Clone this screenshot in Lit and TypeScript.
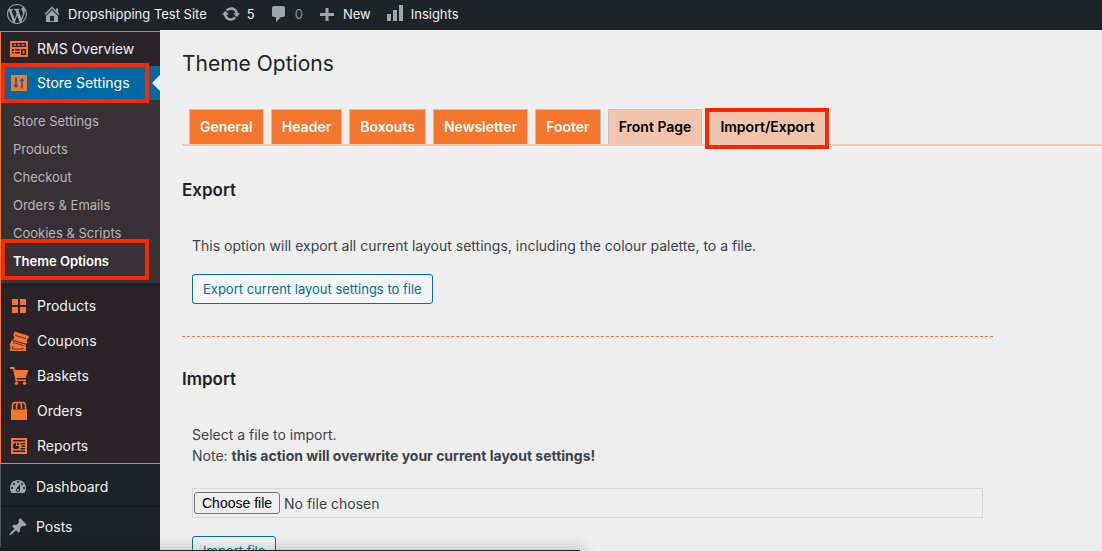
import { LitElement, html, css, svg, nothing, TemplateResult } from "lit";
import { customElement, property } from "lit/decorators.js";
import { classMap } from "lit/directives/class-map.js";

const path = (d: string) => svg`<path fill-rule="evenodd" d=${d}></path>`;

const ICONS: Record<string, TemplateResult> = {
  wordpress: path(
    "M20 10c0-5.51-4.49-10-10-10C4.48 0 0 4.49 0 10c0 5.52 4.48 10 10 10 5.51 0 10-4.48 10-10zM7.78 15.37L4.37 6.22c.55-.02 1.17-.08 1.17-.08.5-.06.44-1.13-.06-1.11 0 0-1.45.11-2.37.11-.18 0-.37 0-.58-.01C4.12 2.69 6.87 1.11 10 1.11c2.33 0 4.45.87 6.05 2.34-.68-.11-1.65.39-1.65 1.58 0 .74.45 1.36.9 2.1.35.61.55 1.36.55 2.46 0 1.49-1.4 5-1.4 5l-3.03-8.37c.54-.02.82-.17.82-.17.5-.05.44-1.25-.06-1.22 0 0-1.44.12-2.38.12-.87 0-2.33-.12-2.33-.12-.5-.03-.56 1.2-.06 1.22l.92.08 1.26 3.41zM17.41 10c.24-.64.74-1.87.43-4.25.7 1.29 1.05 2.71 1.05 4.25 0 3.29-1.73 6.24-4.4 7.78.97-2.59 1.94-5.2 2.92-7.78zM6.1 18.09C3.12 16.65 1.11 13.53 1.11 10c0-1.3.23-2.48.72-3.59C3.25 10.3 4.67 14.2 6.1 18.09zm4.03-6.63l2.58 6.98c-.86.29-1.76.45-2.71.45-.79 0-1.57-.11-2.29-.33.81-2.38 1.62-4.74 2.42-7.1z"
  ),
  home: path(
    "M16 8.5l1.53 1.53-1.06 1.06L10 4.6l-6.47 6.47-1.06-1.06L10 2.5l4 4v-2h2v4zm-6-2.46l6 5.99V18H4v-5.97zM12 17v-5H8v5h4z"
  ),
  update: path(
    "M10.2 3.28c3.53 0 6.43 2.61 6.92 6h2.08l-3.5 4-3.5-4h2.32c-.45-1.97-2.21-3.45-4.32-3.45-1.45 0-2.73.71-3.54 1.78L4.95 5.66C6.23 4.2 8.11 3.28 10.2 3.28zm-.4 13.44c-3.52 0-6.43-2.61-6.92-6H.8l3.5-4c1.17 1.33 2.33 2.67 3.5 4H5.48c.45 1.97 2.21 3.45 4.32 3.45 1.45 0 2.73-.71 3.54-1.78l1.71 1.95c-1.28 1.46-3.15 2.38-5.25 2.38z"
  ),
  comment: path(
    "M5 2h9c1.1 0 2 .9 2 2v7c0 1.1-.9 2-2 2h-2l-5 5v-5H5c-1.1 0-2-.9-2-2V4c0-1.1.9-2 2-2z"
  ),
  plus: path("M17 9v3h-5.500v5h-3v-5H3V9h5.500V4h3v5z"),
  bars: path("M2 10h4v7H2zM8 6h4v11H8zM14 1h4v16h-4z"),
  overview: path(
    "M1 2h18v16H1zM3 4v4h14V4zm0 6v2h2v-2zm3 0v1.500h5V10zm0 3v1.500h5V13zm-3 0v1.500h2V13zm9-3v6h5v-6zM4.500 5.300h2.500v1.400H4.500zM8.500 5.300h2.500v1.400H8.500zM12.500 5.300h3v1.400h-3zM13.500 11.500h2v3h-2z"
  ),
  sliders: path(
    "M2 2h16v16H2zM6.200 4.500v7.500H4.400L7 15l2.600-3H7.800v-7.500zM12.200 8V15.500h1.600V8h1.800L13 5l-2.600 3z"
  ),
  grid: path("M3 3h6v6H3zM11 3h6v6h-6zM3 11h6v6H3zM11 11h6v6h-6z"),
  coupons: svg`
    <path d="M5.500 0.500 L20 5 L19 8 L18 8.500 L17.800 10 L18.300 11 L17.500 13 L3.500 9 L5 7.500 L5.300 6 L4.300 4.500z"></path>
    <path d="M3 9 L17 13 L16.500 17 L1 12.800z"></path>
    <path d="M0.500 13.500 L2 12 L17 16 L17 20 L0.500 20 L1.500 18 L1.500 16z"></path>
    <path class="cut" d="M6 4.300 L17 7.700 M3.500 9.400 L17 13.300 M4 11.500 L14.500 14.500 M4 15 L3.500 18 L14 18 L14 16.500"></path>`,
  cart: svg`
    <path d="M1 1h4.200l1 3H19.500L16.500 12H7.500l.5 1.500h9V15H6.500L4 3H1z"></path>
    <circle cx="7.500" cy="17.300" r="1.700"></circle><circle cx="15.500" cy="17.300" r="1.700"></circle>`,
  bag: svg`
    <path d="M2 8.500h16V19H2z"></path>
    <path class="line" d="M3.500 9V5q0-3.500 3-3.500h7q3 0 3 3.500V9M7.500 8V5q0-3 1.500-3M12.500 8V5q0-3-1.500-3"></path>`,
  report: path(
    "M2 2h16v16H2zM4 4v1.500h12V4zM4 14.500V16h12v-1.500zM7 6.800a3.200 3.200 0 1 0 3.200 3.200H7zM8 6.500V9h2.500A2.700 2.700 0 0 0 8 6.500zM11.500 7v1.400H16V7zm1 2.500v1.400H16V9.500zm-1 2.500v1.400H16V12z"
  ),
  dashboard: path(
    "M3.76 16h12.48c1.1-1.37 1.76-3.11 1.76-5 0-4.42-3.58-8-8-8s-8 3.58-8 8c0 1.89.66 3.63 1.76 5zM10 4c.55 0 1 .45 1 1s-.45 1-1 1-1-.45-1-1 .45-1 1-1zM6 6c.55 0 1 .45 1 1s-.45 1-1 1-1-.45-1-1 .45-1 1-1zm8 0c.55 0 1 .45 1 1s-.45 1-1 1-1-.45-1-1 .45-1 1-1zm-5.37 5.55L12 7v6c0 1.1-.9 2-2 2s-2-.9-2-2c0-.57.24-1.08.63-1.45zM4 10c.55 0 1 .45 1 1s-.45 1-1 1-1-.45-1-1 .45-1 1-1zm12 0c.55 0 1 .45 1 1s-.45 1-1 1-1-.45-1-1 .45-1 1-1zm-5 3c0-.55-.45-1-1-1s-1 .45-1 1 .45 1 1 1 1-.45 1-1z"
  ),
  pin: path(
    "M10.44 3.02l1.82-1.82 6.36 6.35-1.83 1.82c-1.05-.68-2.48-.57-3.41.36l-.75.75c-.92.93-1.04 2.35-.35 3.41l-1.83 1.82-2.41-2.41-2.8 2.79c-.42.42-3.38 2.71-3.8 2.29s1.86-3.39 2.28-3.81l2.79-2.79L4.1 9.36l1.83-1.82c1.05.69 2.48.57 3.4-.36l.75-.75c.93-.92 1.05-2.35.36-3.41z"
  ),
};

@customElement("ui-icon")
export class UiIcon extends LitElement {
  @property() name = "";

  static styles = css`
    :host {
      display: block;
      flex: none;
      width: 20px;
      height: 20px;
    }
    svg {
      display: block;
      width: 100%;
      height: 100%;
      fill: currentColor;
    }
    .cut {
      fill: none;
      stroke: #2a2429;
      stroke-width: 0.8;
    }
    .line {
      fill: none;
      stroke: currentColor;
      stroke-width: 1.6;
    }
  `;

  render() {
    return html`<svg viewBox="0 0 20 20" aria-hidden="true">${ICONS[this.name] ?? nothing}</svg>`;
  }
}

@customElement("admin-bar")
export class AdminBar extends LitElement {
  static styles = css`
    :host {
      display: block;
      background: #1d2327;
      color: #f0f0f1;
    }
    nav {
      display: flex;
      align-items: center;
      height: 28px;
      padding: 0 0 2px 7px;
      gap: 14px;
      font-size: 13px;
    }
    a {
      display: flex;
      align-items: center;
      gap: 6px;
      color: inherit;
      text-decoration: none;
      white-space: nowrap;
    }
    .logo {
      padding-right: 1px;
    }
    ui-icon {
      color: #a0a5aa;
    }
    .dim {
      color: #8f9499;
    }
  `;

  render() {
    return html`<nav aria-label="Toolbar">
      <a href="#" class="logo" aria-label="About"><ui-icon name="wordpress"></ui-icon></a>
      <a href="#"><ui-icon name="home"></ui-icon>Dropshipping Test Site</a>
      <a href="#"><ui-icon name="update"></ui-icon>5</a>
      <a href="#" class="dim"><ui-icon name="comment"></ui-icon>0</a>
      <a href="#"><ui-icon name="plus"></ui-icon>New</a>
      <a href="#"><ui-icon name="bars"></ui-icon>Insights</a>
    </nav>`;
  }
}

const SUBMENU = ["Store Settings", "Products", "Checkout", "Orders & Emails", "Cookies & Scripts", "Theme Options"];
const STORE = [
  ["grid", "Products"],
  ["coupons", "Coupons"],
  ["cart", "Baskets"],
  ["bag", "Orders"],
  ["report", "Reports"],
];
const CORE = [
  ["dashboard", "Dashboard"],
  ["pin", "Posts"],
];

@customElement("side-menu")
export class SideMenu extends LitElement {
  static styles = css`
    :host {
      display: block;
      background: #1d2327;
      color: #f0f0f1;
      font-size: 14px;
      padding-top: 1px;
    }
    ul {
      list-style: none;
      margin: 0;
      padding: 0;
    }
    a {
      display: flex;
      align-items: center;
      color: inherit;
      text-decoration: none;
      white-space: nowrap;
    }
    .shop {
      border: solid #f5762d;
      border-width: 1px 0 1px 1px;
      background: #2a2429;
    }
    .row {
      box-sizing: border-box;
      height: 34px;
      gap: 8px;
      padding: 0 0 1px 8px;
    }
    .row ui-icon {
      color: #f5762d;
    }
    .current {
      position: relative;
      background: #0069a3;
      color: #fff;
    }
    .current::before {
      content: "";
      position: absolute;
      right: 0;
      top: 9px;
      border: 8px solid transparent;
      border-right-color: #eee;
      border-left: 0;
    }
    .mark::after {
      content: "";
      position: absolute;
      inset: -3px 11px -3px 0;
      border: 4px solid #ff2600;
    }
    .sub {
      background: #383136;
      padding: 7px 0 8px;
      font-size: 13px;
      color: #b9b6b9;
    }
    .sub a {
      height: 28px;
      padding-left: 12px;
    }
    .sub .active {
      position: relative;
      color: #fff;
      font-weight: 600;
    }
    .sub .mark::after {
      inset: -8px 11px -5px 0;
    }
    .lower {
      border-top: 5px solid #1d2327;
    }
    .lower .row {
      height: 35px;
      padding-bottom: 0;
    }
    .core {
      border-left: 1px solid #50575e;
      padding-top: 3px;
    }
    .core .row {
      height: 40px;
      padding: 0 0 0 7px;
      border-bottom: 1px solid #15191c;
    }
    .core li:last-child .row {
      border-color: transparent;
    }
    .core .row ui-icon {
      color: #a0a5aa;
    }
  `;

  render() {
    return html`<nav aria-label="Main menu">
      <div class="shop">
        <ul>
          <li><a class="row" href="#"><ui-icon name="overview"></ui-icon>RMS Overview</a></li>
          <li>
            <a class="row current mark" href="#"><ui-icon name="sliders"></ui-icon>Store Settings</a>
            <ul class="sub">
              ${SUBMENU.map((label) => {
                const on = label === "Theme Options";
                return html`<li><a href="#" class=${classMap({ active: on, mark: on })}>${label}</a></li>`;
              })}
            </ul>
          </li>
        </ul>
        <ul class="lower">
          ${STORE.map(([icon, label]) => html`<li><a class="row" href="#"><ui-icon name=${icon}></ui-icon>${label}</a></li>`)}
        </ul>
      </div>
      <ul class="core">
        ${CORE.map(([icon, label]) => html`<li><a class="row" href="#"><ui-icon name=${icon}></ui-icon>${label}</a></li>`)}
      </ul>
    </nav>`;
  }
}

const TABS = ["General", "Header", "Boxouts", "Newsletter", "Footer", "Front Page", "Import/Export"];

@customElement("theme-options")
export class ThemeOptions extends LitElement {
  static styles = css`
    :host {
      display: block;
      padding: 18px 0 0 22px;
      color: #3c434a;
      font-size: 14px;
      line-height: 21px;
    }
    h1 {
      margin: 0;
      font-size: 21px;
      font-weight: 400;
      line-height: 32px;
      color: #1d2327;
    }
    h2 {
      margin: 0;
      font-size: 17px;
      font-weight: 600;
      line-height: 24px;
      color: #1d2327;
    }
    p {
      margin: 0;
    }
    .tabs {
      display: flex;
      gap: 7px;
      margin-top: 29px;
      padding-left: 7px;
      border-bottom: 2px solid #f1c4ab;
    }
    .tab {
      position: relative;
      padding: 7px 10px;
      border: 1px solid #c3c4c7;
      border-bottom: 0;
      background: #f5762d;
      color: #fff;
      font-weight: 600;
      line-height: 20px;
      text-decoration: none;
      white-space: nowrap;
    }
    .pale {
      background: #f1c4ab;
      color: #000;
    }
    .mark::after {
      content: "";
      position: absolute;
      inset: -2px -4px -5px -5px;
      border: 4px solid #ff2600;
    }
    .export {
      margin-top: 32px;
      width: 811px;
      max-width: 100%;
      border-bottom: 1px dashed #f5762d;
      padding-bottom: 32px;
    }
    .import {
      margin-top: 30px;
    }
    .body {
      padding: 33px 0 0 10px;
    }
    button {
      display: block;
      height: 30px;
      margin-top: 18px;
      padding: 0 10px;
      border: 1px solid #0071a1;
      border-radius: 3px;
      background: #f3f5f6;
      color: #0071a1;
      font: inherit;
      font-size: 13px;
      white-space: nowrap;
    }
    .file {
      position: relative;
      display: flex;
      align-items: center;
      gap: 4px;
      box-sizing: border-box;
      width: 791px;
      max-width: 100%;
      height: 30px;
      margin-top: 22px;
      padding-left: 1px;
      border: 1px solid #d8d8d8;
    }
    .file input {
      position: absolute;
      inset: 0;
      width: 100%;
      opacity: 0;
    }
    .choose {
      padding: 0 7px;
      border: 1px solid #767676;
      border-radius: 3px;
      background: #efefef;
      color: #000;
      font-family: "Liberation Sans", sans-serif;
      line-height: 20px;
    }
  `;

  render() {
    return html`
      <h1>Theme Options</h1>
      <nav class="tabs" aria-label="Theme option sections">
        ${TABS.map(
          (label, i) =>
            html`<a href="#" class=${classMap({ tab: true, pale: i > 4, mark: label === "Import/Export" })}>${label}</a>`
        )}
      </nav>
      <section class="export">
        <h2>Export</h2>
        <div class="body">
          <p>This option will export all current layout settings, including the colour palette, to a file.</p>
          <button type="button">Export current layout settings to file</button>
        </div>
      </section>
      <section class="import">
        <h2>Import</h2>
        <div class="body">
          <p>Select a file to import.</p>
          <p>Note: <strong>this action will overwrite your current layout settings!</strong></p>
          <div class="file">
            <label class="choose" for="layout-file">Choose file</label>
            <span>No file chosen</span>
            <input id="layout-file" type="file" />
          </div>
          <button type="button">Import file</button>
        </div>
      </section>
    `;
  }
}

@customElement("app-root")
export class AppRoot extends LitElement {
  static styles = css`
    :host {
      position: relative;
      display: flex;
      flex-direction: column;
      height: 100vh;
      overflow: hidden;
      background: #eee;
      font-family: Inter, Roboto, "Liberation Sans", sans-serif;
    }
    .layout {
      display: grid;
      grid-template-columns: 160px minmax(0, 1fr);
      flex: 1;
      min-height: 0;
    }
    .status {
      position: absolute;
      left: 0;
      bottom: 0;
      width: 580px;
      max-width: 100%;
      height: 1px;
      background: #222;
      box-shadow: 0 4px 16px 4px rgba(0, 0, 0, 0.3);
    }
  `;

  render() {
    return html`
      <admin-bar></admin-bar>
      <div class="layout">
        <side-menu></side-menu>
        <theme-options></theme-options>
      </div>
      <div class="status"></div>
    `;
  }
}
